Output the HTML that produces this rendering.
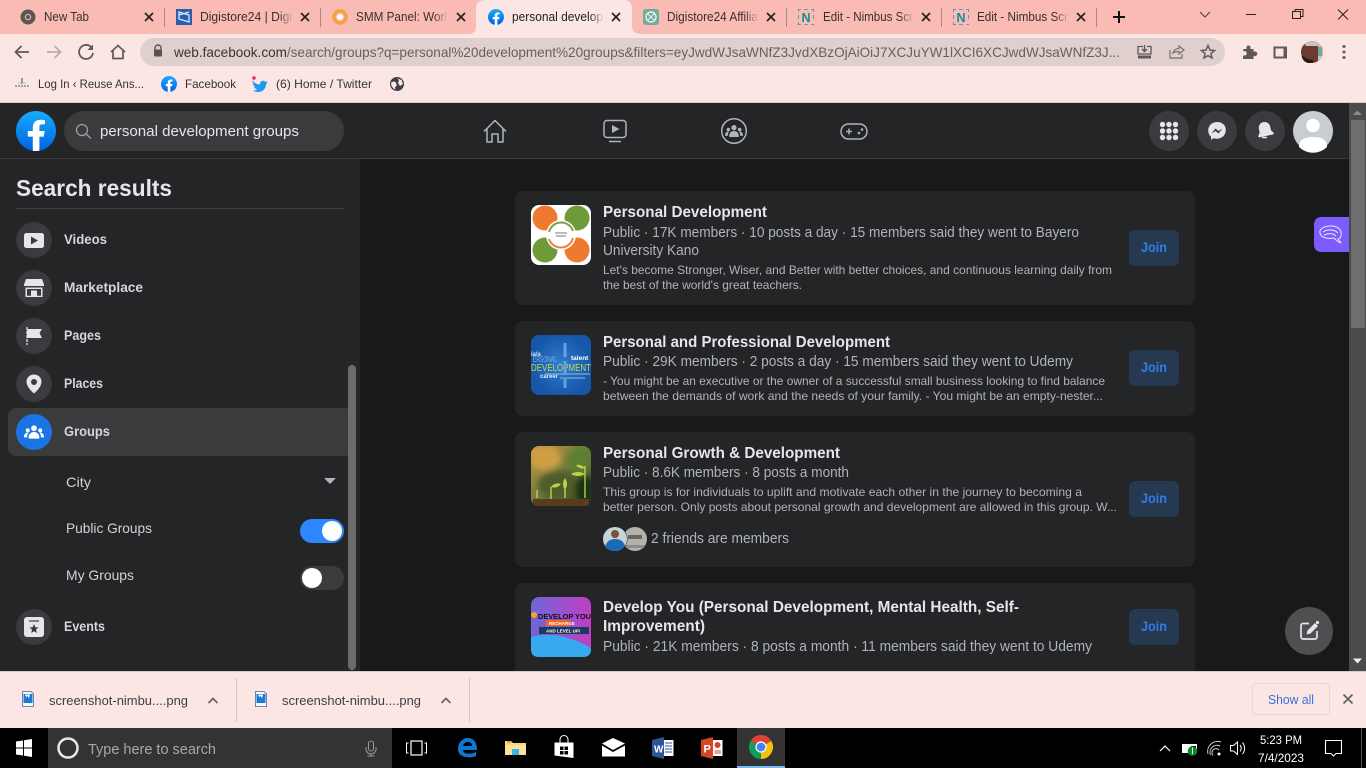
<!DOCTYPE html>
<html><head><meta charset="utf-8"><title>personal development groups</title>
<style>
html,body{margin:0;padding:0;width:1366px;height:768px;overflow:hidden;background:#18191a}
svg{display:block;font-family:"Liberation Sans",sans-serif}
.tab{font-size:12.5px;fill:#3a2f2e}
.bm{font-size:12px;fill:#333}
.side{font-size:14px;font-weight:700;fill:#d4d6db}
.opt{font-size:14px;fill:#d0d2d6}
.t{font-size:16px;font-weight:700;fill:#e4e6eb}
.m{font-size:14.5px;fill:#b0b3b8}
.d{font-size:12px;fill:#b0b3b8}
.j{font-size:14px;font-weight:700;fill:#2d7fe8}
</style></head><body>
<svg width="1366" height="768" viewBox="0 0 1366 768" xmlns="http://www.w3.org/2000/svg">
<defs>
<linearGradient id="fbg" x1="0" y1="0" x2="0" y2="1"><stop offset="0" stop-color="#18acfe"/><stop offset="1" stop-color="#0163e0"/></linearGradient>
<linearGradient id="fade" x1="0" x2="1"><stop offset="0" stop-color="#fabbb4" stop-opacity="0"/><stop offset="1" stop-color="#fabbb4"/></linearGradient>
<linearGradient id="fadeA" x1="0" x2="1"><stop offset="0" stop-color="#fce6e4" stop-opacity="0"/><stop offset="1" stop-color="#fce6e4"/></linearGradient>
<linearGradient id="g3" x1="0" y1="0" x2="1" y2="1"><stop offset="0" stop-color="#c99a3e"/><stop offset=".5" stop-color="#6f7a3c"/><stop offset="1" stop-color="#263f1c"/></linearGradient>
<linearGradient id="g4" x1="0" y1="0" x2="1" y2="0"><stop offset="0" stop-color="#6f66d8"/><stop offset="1" stop-color="#c03fc4"/></linearGradient>
<radialGradient id="g2"><stop offset="0" stop-color="#2f7fd2"/><stop offset="1" stop-color="#1757a8"/></radialGradient>
<symbol id="fb" viewBox="0 0 40 40"><path fill="url(#fbg)" d="M16.7 39.8C7.2 38.1 0 29.9 0 20 0 9 9 0 20 0s20 9 20 20c0 9.900-7.200 18.100-16.700 19.800l-1.100-.9h-4.400l-1.100.9z"/><path fill="#fff" d="M27.800 25.600l.9-5.600h-5.300v-3.900c0-1.600.6-2.800 3-2.800H29V9.200c-1.400-.2-3-.4-4.400-.4-4.600 0-7.800 2.800-7.800 7.800V20h-5v5.600h5v14.100c1.100.2 2.200.3 3.300.3 1.100 0 2.200-.1 3.300-.3V25.600h4.400z"/></symbol>
<symbol id="x" viewBox="0 0 10 10"><path d="M1 1L9 9M9 1L1 9" stroke="#222" stroke-width="1.700" fill="none"/></symbol>
<symbol id="nim" viewBox="0 0 16 16"><path d="M0 3V0H3M6 0H10M13 0H16V3M16 6V10M0 6V10M0 13V16H3M6 16H10M13 16H16" fill="none" stroke="#0f8c9c" stroke-width="1.200"/><text x="3.500" y="13" font-size="12.500" font-weight="700" fill="#0f8c9c">N</text></symbol>
<symbol id="ppl" viewBox="0 0 24 24"><circle cx="12" cy="7.500" r="3.500"/><circle cx="4.500" cy="10" r="2.400"/><circle cx="19.500" cy="10" r="2.400"/><path d="M5.500 19c0-4.300 2.600-7 6.500-7s6.500 2.700 6.500 7c0 .6-.4 1-1 1h-11c-.6 0-1-.4-1-1zM0 18c0-3 1.500-5.300 4.500-5.300.5 0 .8 0 1 .1C4.300 14 3.700 16 3.700 18.500H1c-.6 0-1-.1-1-.5zM24 18c0-3-1.500-5.300-4.500-5.300-.5 0-.8 0-1 .1 1.200 1.200 1.800 3.200 1.800 5.700H23c.6 0 1-.1 1-.5z"/></symbol>
<symbol id="file" viewBox="0 0 12 16"><path d="M.5.500H9L11.500 3V15.500H.5Z" fill="#f5f7fa" stroke="#6a86a8"/><rect x="1.500" y="3" width="9" height="9" fill="#1c78d4"/><path d="M3 3.500l1.500 3 1-2 1.500 3 1-4z" fill="#fff"/></symbol>
<filter id="bl"><feGaussianBlur stdDeviation="3"/></filter>
<clipPath id="c3"><rect x="531" y="446" width="60" height="60" rx="8"/></clipPath>
</defs>

<!-- tab strip -->
<rect width="1366" height="34" fill="#fabbb4"/>
<rect y="34" width="1366" height="68" fill="#fce6e4"/>
<path d="M468 34Q476 34 476 26V9Q476 0 485 0H623Q632 0 632 9V26Q632 34 640 34Z" fill="#fce6e4"/>
<g stroke="#a58a86" stroke-width="1"><path d="M164.500 8V27M320.500 8V27M786.500 8V27M941.500 8V27M1096.500 8V27"/></g>

<circle cx="28" cy="17" r="7.500" fill="#5a5655"/><circle cx="28" cy="17" r="3.200" fill="#fabbb4"/><circle cx="28" cy="17" r="2.200" fill="#5a5655"/>
<text class="tab" x="44" y="21" textLength="45" lengthAdjust="spacingAndGlyphs">New Tab</text>
<use href="#x" x="144" y="12" width="10" height="10"/>

<rect x="176" y="9" width="16" height="16" fill="#2a5db0"/><path d="M179 12L189 15V22L179 19ZM189 12L179 15" fill="none" stroke="#d9e6f7" stroke-width="1.300"/>
<text class="tab" x="200" y="21" textLength="92" lengthAdjust="spacingAndGlyphs">Digistore24 | Digi</text>
<rect x="279" y="8" width="14" height="18" fill="url(#fade)"/>
<use href="#x" x="300" y="12" width="10" height="10"/>

<circle cx="340" cy="17" r="6" fill="none" stroke="#f6a13b" stroke-width="3.500"/><circle cx="340" cy="17" r="3" fill="#fff"/>
<text class="tab" x="356" y="21" textLength="91" lengthAdjust="spacingAndGlyphs">SMM Panel: Worl</text>
<rect x="434" y="8" width="14" height="18" fill="url(#fade)"/>
<use href="#x" x="456" y="12" width="10" height="10"/>

<use href="#fb" x="488" y="9" width="16" height="16"/>
<text class="tab" x="512" y="21" textLength="91" lengthAdjust="spacingAndGlyphs" style="fill:#222">personal develop</text>
<rect x="590" y="8" width="14" height="18" fill="url(#fadeA)"/>
<use href="#x" x="611" y="12" width="10" height="10"/>

<rect x="643" y="9" width="16" height="16" rx="3" fill="#74aa9c"/><circle cx="651" cy="17" r="5" fill="none" stroke="#e5f2ee" stroke-width="1.400"/><path d="M648 14L654 20M654 14L648 20" stroke="#e5f2ee"/>
<text class="tab" x="667" y="21" textLength="91" lengthAdjust="spacingAndGlyphs">Digistore24 Affilia</text>
<rect x="745" y="8" width="14" height="18" fill="url(#fade)"/>
<use href="#x" x="766" y="12" width="10" height="10"/>

<use href="#nim" x="798" y="9" width="16" height="16"/>
<text class="tab" x="823" y="21" textLength="90" lengthAdjust="spacingAndGlyphs">Edit - Nimbus Scr</text>
<rect x="900" y="8" width="14" height="18" fill="url(#fade)"/>
<use href="#x" x="921" y="12" width="10" height="10"/>

<use href="#nim" x="953" y="9" width="16" height="16"/>
<text class="tab" x="977" y="21" textLength="91" lengthAdjust="spacingAndGlyphs">Edit - Nimbus Scr</text>
<rect x="1055" y="8" width="14" height="18" fill="url(#fade)"/>
<use href="#x" x="1076" y="12" width="10" height="10"/>

<path d="M1119 11V23M1113 17H1125" stroke="#111" stroke-width="2" fill="none"/>
<path d="M1200 12L1205 17L1210 12" stroke="#444" fill="none"/>
<path d="M1246 14.500H1256" stroke="#222"/>
<path d="M1292.500 11.500H1300.500V18.500H1292.500ZM1295 11V9.500H1303V16.500H1301" stroke="#222" fill="none"/>
<path d="M1338 9.500L1348 19.500M1348 9.500L1338 19.500" stroke="#222" fill="none"/>

<!-- toolbar -->
<path d="M29 52H16M21.500 46L15.500 52L21.500 58" stroke="#5f5a59" stroke-width="1.800" fill="none"/>
<path d="M47 52H60M54.500 46L60.500 52L54.500 58" stroke="#b9aeac" stroke-width="1.800" fill="none"/>
<path d="M91.500 47.500A7 7 0 1 0 93 53" stroke="#5f5a59" stroke-width="1.800" fill="none"/><path d="M93 44.500V50H87.500Z" fill="#5f5a59"/>
<path d="M111 52L118 45.500L125 52M113 50.500V58.500H123V50.500" stroke="#5f5a59" stroke-width="1.700" fill="none"/>
<rect x="140" y="38" width="1085" height="28" rx="14" fill="#dfd0cd"/>
<path d="M155 49.500V48a3 3 0 0 1 6 0V49.500" stroke="#5a5150" stroke-width="1.400" fill="none"/><rect x="154" y="49.500" width="8" height="7" rx="1" fill="#5a5150"/>
<text x="174" y="57" font-size="14" fill="#6a5f5e" textLength="946" lengthAdjust="spacingAndGlyphs"><tspan fill="#3c3332">web.facebook.com</tspan>/search/groups?q=personal%20development%20groups&amp;filters=eyJwdWJsaWNfZ3JvdXBzOjAiOiJ7XCJuYW1lXCI6XCJwdWJsaWNfZ3J...</text>
<path d="M1143 46.500H1138V54H1151V46.500H1147" fill="none" stroke="#5f5a59" stroke-width="1.300"/><path d="M1144.500 45V51.500M1142 49L1144.500 51.500L1147 49" fill="none" stroke="#5f5a59" stroke-width="1.400"/><rect x="1138" y="55.500" width="13" height="3" fill="#5f5a59"/>
<path d="M1170 50V58H1182V54M1173 53C1174 49.500 1177 48.500 1179 48.500V46L1184 50L1179 54V51.500C1177 51.500 1175 51.500 1173 53Z" fill="none" stroke="#7a6f6e" stroke-width="1.200"/>
<path d="M1208 45.500L1210 50L1214.500 50.500L1211 53.500L1212 58L1208 55.600L1204 58L1205 53.500L1201.500 50.500L1206 50Z" fill="none" stroke="#5f5a59" stroke-width="1.500"/>
<path d="M1243.500 49H1246.500V47.500a2 2 0 0 1 4 0V49H1253.500V51.500H1255a2.300 2.300 0 0 1 0 4.600H1253.500V59H1243V55.500H1244.500a2.200 2.200 0 0 0 0-4.400H1243Z" fill="#5f5a59"/>
<path d="M1273.500 46.500H1287V58.500H1273.500Z" fill="#5f5a59"/><rect x="1275.500" y="48.500" width="8" height="8" fill="#fce6e4"/>
<circle cx="1312" cy="52" r="11" fill="#6b3a30"/><path d="M1312 41a11 11 0 0 1 11 11a11 11 0 0 1-5 9.200V46H1306L1304.500 44A11 11 0 0 1 1312 41Z" fill="#c9c0c4"/><path d="M1318 47h4v9h-4z" fill="#6fa6a0"/><path d="M1301.500 55C1305 58 1309 60 1313 60V63H1308C1304 62 1302 59 1301.500 55Z" fill="#2a1712"/>
<circle cx="1344" cy="46.500" r="1.500" fill="#5f5a59"/><circle cx="1344" cy="52" r="1.500" fill="#5f5a59"/><circle cx="1344" cy="57.500" r="1.500" fill="#5f5a59"/>

<!-- bookmarks -->
<path d="M15 86H29" stroke="#7c8a80" stroke-width="1.500" stroke-dasharray="2 1"/><path d="M22 78V84" stroke="#8aa092" stroke-width="2"/><path d="M18 83H26" stroke="#bbb" stroke-width="1"/>
<text class="bm" x="38" y="88" textLength="106" lengthAdjust="spacingAndGlyphs">Log In ‹ Reuse Ans...</text>
<use href="#fb" x="161" y="76" width="16" height="16"/>
<text class="bm" x="185" y="88" textLength="51" lengthAdjust="spacingAndGlyphs">Facebook</text>
<path d="M252.500 80.500C254.500 83 257 84.300 260 84.500C259.500 81.500 263 79.500 265.300 81.700L267.500 81C267 82 266.500 82.500 266 83L267.500 82.700C267 83.500 266.500 84 266 84.300C266 89 262.500 92 258.500 92C256 92 254.500 91.500 253 90.500C255 90.700 256.500 90 257.500 89.300C255.500 89 254.500 88 254 86.700H255.500C253.500 86 252.800 84.500 252.800 83.500L254.300 84C252.800 83 252 81.500 252.500 80.500Z" fill="#1d9bf0"/><circle cx="254" cy="78" r="1.800" fill="#e8246a"/>
<text class="bm" x="276" y="88" textLength="96" lengthAdjust="spacingAndGlyphs">(6) Home / Twitter</text>
<circle cx="397" cy="84" r="7" fill="#3c4043"/><path d="M391.500 82L395 81.500L397 85L395 87.500L395.500 90L393 88L391 85ZM397 78L401.500 80L403 84L400 86L398 83L399 80Z" fill="#fce6e4"/>
<rect y="102" width="1366" height="1" fill="#d8ccca"/>

<!-- facebook page -->
<rect y="103" width="1349" height="568" fill="#18191a"/>
<rect y="103" width="1349" height="55" fill="#242526"/>
<rect y="158" width="1349" height="1" fill="#3a3b3c"/>
<use href="#fb" x="16" y="111" width="40" height="40"/>
<rect x="64" y="111" width="280" height="40" rx="20" fill="#3a3b3c"/>
<circle cx="82" cy="130" r="5.500" fill="none" stroke="#9a9da1" stroke-width="1.300"/><path d="M86 134L91 138.500" stroke="#9a9da1" stroke-width="1.500"/>
<text x="100" y="136" font-size="15" fill="#e4e6eb" textLength="199" lengthAdjust="spacingAndGlyphs">personal development groups</text>

<path d="M484 131.500L495 120.500L506 131.500M487 129V142H492V134H498V142H503V129" fill="none" stroke="#b0b3b8" stroke-width="1.500" stroke-linejoin="round"/>
<rect x="604" y="120.500" width="22" height="17" rx="3" fill="none" stroke="#b0b3b8" stroke-width="1.500"/><path d="M612 125V133L619.500 129Z" fill="#b0b3b8"/><path d="M609 141.500H621" stroke="#b0b3b8" stroke-width="1.500"/>
<circle cx="734" cy="131" r="12.300" fill="none" stroke="#b0b3b8" stroke-width="1.500"/><use href="#ppl" x="725" y="122" width="18" height="18" fill="#b0b3b8"/>
<rect x="841" y="124" width="26" height="15" rx="7.500" fill="none" stroke="#b0b3b8" stroke-width="1.500"/><path d="M846 131.500H852M849 128.500V134.500" stroke="#b0b3b8" stroke-width="1.500"/><circle cx="859" cy="133" r="1.300" fill="#b0b3b8"/><circle cx="862" cy="129.500" r="1.300" fill="#b0b3b8"/>

<circle cx="1169" cy="131" r="20" fill="#3a3b3c"/>
<g fill="#e4e6eb"><circle cx="1162.500" cy="124.500" r="2.700"/><circle cx="1169" cy="124.500" r="2.700"/><circle cx="1175.500" cy="124.500" r="2.700"/><circle cx="1162.500" cy="131" r="2.700"/><circle cx="1169" cy="131" r="2.700"/><circle cx="1175.500" cy="131" r="2.700"/><circle cx="1162.500" cy="137.500" r="2.700"/><circle cx="1169" cy="137.500" r="2.700"/><circle cx="1175.500" cy="137.500" r="2.700"/></g>
<circle cx="1217" cy="131" r="20" fill="#3a3b3c"/>
<path d="M1217 122c-5 0-8.800 3.700-8.800 8.500 0 2.500 1 4.700 2.800 6.200v3l2.700-1.500c1 .3 2.100.5 3.300.5 5 0 8.800-3.700 8.800-8.700S1222 122 1217 122z" fill="#e4e6eb"/><path d="M1211.500 133.500L1215.500 128.500L1218.500 131L1222.500 128.500L1218.500 133.500L1215.500 131Z" fill="#3a3b3c"/>
<circle cx="1265" cy="131" r="20" fill="#3a3b3c"/>
<path d="M1265 122c-3.500 0-5.800 2.700-5.800 6v3.500l-2 3c-.4.700 0 1.500.8 1.500h14c.8 0 1.200-.8.800-1.500l-2-3V128c0-3.300-2.300-6-5.800-6z" fill="#e4e6eb" transform="rotate(-12 1265 130)"/><path d="M1262 137.500H1267" stroke="#e4e6eb" stroke-width="1.500"/>
<circle cx="1313" cy="131" r="20" fill="#c9ccd1"/>
<circle cx="1313" cy="125.500" r="6.800" fill="#fff"/><path d="M1299 147C1299 139 1305 137 1313 137S1327 139 1327 147A20 20 0 0 1 1299 147Z" fill="#fff"/>

<!-- sidebar -->
<rect y="159" width="360" height="512" fill="#242526"/>
<text x="16" y="196" font-size="23.500" font-weight="700" fill="#e4e6eb" textLength="156" lengthAdjust="spacingAndGlyphs">Search results</text>
<rect x="16" y="208" width="328" height="1" fill="#3e4042"/>
<rect x="8" y="408" width="344" height="48" rx="8" fill="#3a3b3c"/>
<rect x="348" y="365" width="8" height="305" rx="4" fill="#6a6b6c"/>

<circle cx="34" cy="240" r="18" fill="#3a3b3c"/>
<rect x="24" y="233" width="20" height="15" rx="2.500" fill="#e4e6eb"/><path d="M31 236.500V244.500L38 240.500Z" fill="#3a3b3c"/>
<text class="side" x="64" y="244" textLength="43" lengthAdjust="spacingAndGlyphs">Videos</text>

<circle cx="34" cy="288" r="18" fill="#3a3b3c"/>
<path d="M26 279H42L44 284.500V286H24V284.500Z" fill="#e4e6eb"/><path d="M25.500 287.500H42.500V297H25.500Z" fill="#e4e6eb"/><path d="M27 289H41V295.700H37V290.500H31V295.700H27Z" fill="#3a3b3c"/>
<text class="side" x="64" y="292" textLength="79" lengthAdjust="spacingAndGlyphs">Marketplace</text>

<circle cx="34" cy="336" r="18" fill="#3a3b3c"/>
<path d="M27 327V345" stroke="#e4e6eb" stroke-width="1.300" stroke-dasharray="3 1"/><path d="M27 329H42L39.500 333L42 338H27Z" fill="#e4e6eb"/>
<text class="side" x="64" y="340" textLength="37" lengthAdjust="spacingAndGlyphs">Pages</text>

<circle cx="34" cy="384" r="18" fill="#3a3b3c"/>
<path d="M34 374.500c4.500 0 7.500 3.200 7.500 7.300 0 4.500-4.500 9-7 11.300-.3.300-.7.300-1 0-2.500-2.300-7-6.800-7-11.300 0-4.100 3-7.300 7.500-7.300z" fill="#e4e6eb"/><circle cx="34" cy="382" r="3" fill="#3a3b3c"/>
<text class="side" x="64" y="388" textLength="39" lengthAdjust="spacingAndGlyphs">Places</text>

<circle cx="34" cy="432" r="18" fill="#1b74e4"/><use href="#ppl" x="24" y="422" width="20" height="20" fill="#fff"/>
<text class="side" x="64" y="436" textLength="46" lengthAdjust="spacingAndGlyphs">Groups</text>

<text class="opt" x="66" y="487" font-size="15" textLength="25" lengthAdjust="spacingAndGlyphs">City</text>
<path d="M324 478H336L330 484Z" fill="#b0b3b8"/>
<text class="opt" x="66" y="533" textLength="86" lengthAdjust="spacingAndGlyphs">Public Groups</text>
<rect x="300" y="519" width="44" height="24" rx="12" fill="#2d88ff"/><circle cx="332" cy="531" r="10" fill="#fff"/>
<text class="opt" x="66" y="580" textLength="68" lengthAdjust="spacingAndGlyphs">My Groups</text>
<rect x="300" y="566" width="44" height="24" rx="12" fill="#3a3b3c"/><circle cx="312" cy="578" r="10" fill="#fff"/>

<circle cx="34" cy="627" r="18" fill="#3a3b3c"/>
<rect x="24" y="617" width="20" height="20" rx="3" fill="#e4e6eb"/><path d="M29 621H39" stroke="#3a3b3c" stroke-width="1.200"/><path d="M34 624L35.300 627.200L38.500 627.500L36 629.600L36.800 633L34 631.200L31.200 633L32 629.600L29.500 627.500L32.700 627.200Z" fill="#3a3b3c"/>
<text class="side" x="64" y="631" textLength="41" lengthAdjust="spacingAndGlyphs">Events</text>

<!-- cards -->
<g fill="#242526"><rect x="515" y="191" width="680" height="114" rx="8"/><rect x="515" y="321" width="680" height="95" rx="8"/><rect x="515" y="432" width="680" height="135" rx="8"/><rect x="515" y="583" width="680" height="96" rx="8"/></g>

<!-- thumb 1 -->
<rect x="531" y="205" width="60" height="60" rx="8" fill="#fff"/>
<circle cx="545" cy="218" r="12.500" fill="#ee7a30"/><circle cx="577" cy="218" r="12.500" fill="#6f9a3a"/><circle cx="545" cy="250" r="12.500" fill="#6f9a3a"/><circle cx="577" cy="250" r="12.500" fill="#ee7a30"/>
<circle cx="561" cy="235" r="15" fill="#fff"/><path d="M549 232A12.500 12.500 0 0 1 573 231" fill="none" stroke="#7fa04a" stroke-width="2"/><path d="M573 238A12.500 12.500 0 0 1 549 239" fill="none" stroke="#e6824a" stroke-width="2"/>
<path d="M555 233H567M556 236H566" stroke="#777" stroke-width="1"/>
<!-- thumb 2 -->
<rect x="531" y="335" width="60" height="60" rx="8" fill="url(#g2)"/>
<text x="531" y="371" font-size="10.500" fill="#c9d94a" textLength="60" lengthAdjust="spacingAndGlyphs">DEVELOPMENT</text>
<text x="533" y="362" font-size="8.500" fill="#7fb0e6" textLength="24" lengthAdjust="spacingAndGlyphs">ERSONAL</text>
<text x="571" y="360" font-size="6.500" font-weight="700" fill="#fff">talent</text>
<text x="531" y="356" font-size="6" font-weight="700" fill="#d7e6f7">ials</text>
<text x="540" y="378" font-size="6" font-weight="700" fill="#e5edf7">career</text>
<path d="M565 343V388" stroke="#6aa0dc" stroke-width="3" stroke-dasharray="14 4"/><path d="M545 374H590M560 378H585" stroke="#6aa0dc" stroke-width="1.500"/>
<!-- thumb 3 -->
<rect x="531" y="446" width="60" height="60" rx="8" fill="url(#g3)"/>
<g clip-path="url(#c3)"><g filter="url(#bl)"><ellipse cx="545" cy="458" rx="16" ry="12" fill="#cf9f45"/><ellipse cx="580" cy="460" rx="12" ry="14" fill="#5d7f35"/><ellipse cx="560" cy="485" rx="22" ry="14" fill="#4f5d2c"/><ellipse cx="585" cy="490" rx="10" ry="14" fill="#1f3316"/></g></g>
<path d="M533 499H589V504Q589 506 583 506H539Q533 506 533 504Z" fill="#5a3b1e"/>
<g fill="none" stroke="#c7d65c" stroke-width="1.300"><path d="M551 499V487M565 498V480M585 498V466M537 498V490"/></g>
<g fill="#bcd44a"><path d="M565 478Q561 484 565 490Q569 484 565 478Z"/><path d="M551 487Q555 482 561 484Q557 489 551 487Z"/><path d="M585 474Q578 470 571 474Q578 478 585 474Z"/><path d="M585 468Q581 464 576 465Q580 470 585 468Z"/></g>
<!-- thumb 4 -->
<rect x="531" y="597" width="60" height="60" rx="8" fill="url(#g4)"/>
<path d="M531 637Q560 630 591 648V649Q591 657 583 657H539Q531 657 531 649Z" fill="#37a9ee"/>
<text x="538" y="619" font-size="7.500" font-weight="700" fill="#111" textLength="53" lengthAdjust="spacingAndGlyphs">DEVELOP YOU</text>
<circle cx="534" cy="615" r="3" fill="#f5a623"/>
<rect x="546" y="620" width="24" height="6" rx="1" fill="#f3641e"/><text x="549" y="625" font-size="4.500" font-weight="700" fill="#fff">RECHARGE</text>
<rect x="539" y="627" width="50" height="7" rx="1" fill="#1d3a5c"/><text x="546" y="632.500" font-size="4.500" font-weight="700" fill="#fff">AND LEVEL UP!</text>

<!-- card 1 -->
<text class="t" x="603" y="217" textLength="164" lengthAdjust="spacingAndGlyphs">Personal Development</text>
<text class="m" x="603" y="237" textLength="476" lengthAdjust="spacingAndGlyphs">Public · 17K members · 10 posts a day · 15 members said they went to Bayero</text>
<text class="m" x="603" y="255" textLength="96" lengthAdjust="spacingAndGlyphs">University Kano</text>
<text class="d" x="603" y="274" textLength="509" lengthAdjust="spacingAndGlyphs">Let's become Stronger, Wiser, and Better with better choices, and continuous learning daily from</text>
<text class="d" x="603" y="289" textLength="199" lengthAdjust="spacingAndGlyphs">the best of the world's great teachers.</text>
<rect x="1129" y="230" width="50" height="36" rx="6" fill="#263951"/><text class="j" x="1141" y="252" textLength="26" lengthAdjust="spacingAndGlyphs">Join</text>
<!-- card 2 -->
<text class="t" x="603" y="347" textLength="287" lengthAdjust="spacingAndGlyphs">Personal and Professional Development</text>
<text class="m" x="603" y="366" textLength="470" lengthAdjust="spacingAndGlyphs">Public · 29K members · 2 posts a day · 15 members said they went to Udemy</text>
<text class="d" x="603" y="385" textLength="502" lengthAdjust="spacingAndGlyphs">- You might be an executive or the owner of a successful small business looking to find balance</text>
<text class="d" x="603" y="400" textLength="500" lengthAdjust="spacingAndGlyphs">between the demands of work and the needs of your family. - You might be an empty-nester...</text>
<rect x="1129" y="350" width="50" height="36" rx="6" fill="#263951"/><text class="j" x="1141" y="372" textLength="26" lengthAdjust="spacingAndGlyphs">Join</text>
<!-- card 3 -->
<text class="t" x="603" y="458" textLength="237" lengthAdjust="spacingAndGlyphs">Personal Growth &amp; Development</text>
<text class="m" x="603" y="477" textLength="246" lengthAdjust="spacingAndGlyphs">Public · 8.6K members · 8 posts a month</text>
<text class="d" x="603" y="496" textLength="479" lengthAdjust="spacingAndGlyphs">This group is for individuals to uplift and motivate each other in the journey to becoming a</text>
<text class="d" x="603" y="511" textLength="514" lengthAdjust="spacingAndGlyphs">better person. Only posts about personal growth and development are allowed in this group. W...</text>
<circle cx="635" cy="539" r="12" fill="#b5b2ad"/><path d="M628 535H642V539H628Z" fill="#6a6662"/><path d="M626 545H644V548H626Z" fill="#8f8c88"/>
<circle cx="615" cy="539" r="12.500" fill="#242526"/><circle cx="615" cy="539" r="12" fill="#c6d4d8"/><circle cx="615" cy="534" r="4" fill="#7a5236"/><path d="M605 547Q607 539 615 539Q623 539 625 546Q621 551 615 551Q609 551 605 547Z" fill="#1b6bb8"/>
<text class="m" x="651" y="543" textLength="138" lengthAdjust="spacingAndGlyphs">2 friends are members</text>
<rect x="1129" y="481" width="50" height="36" rx="6" fill="#263951"/><text class="j" x="1141" y="503" textLength="26" lengthAdjust="spacingAndGlyphs">Join</text>
<!-- card 4 -->
<text class="t" x="603" y="612" textLength="416" lengthAdjust="spacingAndGlyphs">Develop You (Personal Development, Mental Health, Self-</text>
<text class="t" x="603" y="631" textLength="102" lengthAdjust="spacingAndGlyphs">Improvement)</text>
<text class="m" x="603" y="651" textLength="489" lengthAdjust="spacingAndGlyphs">Public · 21K members · 8 posts a month · 11 members said they went to Udemy</text>
<rect x="1129" y="609" width="50" height="36" rx="6" fill="#263951"/><text class="j" x="1141" y="631" textLength="26" lengthAdjust="spacingAndGlyphs">Join</text>

<!-- brain tab -->
<path d="M1349 217H1322Q1314 217 1314 225V244Q1314 252 1322 252H1349Z" fill="#7c5cfc"/>
<g fill="none" stroke="#efeaff" stroke-width="1"><path d="M1320 233C1319 229 1324 226 1331 226C1338 226 1342 230 1341 235C1341 238 1339 239 1338 239L1341 243L1337 241L1334 238C1328 239 1321 238 1320 233Z"/><path d="M1323 232C1327 229 1334 229 1338 233M1324 235C1328 233 1333 233 1336 236"/></g>
<!-- compose fab -->
<circle cx="1309" cy="631" r="24" fill="#4e4f50"/>
<path d="M1309 623.500H1303A2 2 0 0 0 1301 625.500V637A2 2 0 0 0 1303 639H1315A2 2 0 0 0 1317 637V631" fill="none" stroke="#e4e6eb" stroke-width="1.700"/><path d="M1306.500 634.500L1307.500 630.500L1315 623L1318 626L1310.500 633.500Z" fill="#e4e6eb"/><circle cx="1317.500" cy="622.500" r="1.600" fill="#e4e6eb"/>

<!-- page scrollbar -->
<rect x="1349" y="103" width="17" height="568" fill="#4a4b4c"/>
<path d="M1353 115L1357.500 110.500L1362 115Z" fill="#8a8b8c"/>
<rect x="1351" y="120" width="14" height="208" fill="#6e6e6e"/>
<path d="M1353 658.500H1362L1357.500 663.500Z" fill="#f0f0f0"/>

<!-- downloads bar -->
<rect y="671" width="1366" height="57" fill="#fce6e4"/>
<rect y="671" width="1366" height="1" fill="#d8ccca"/>
<use href="#file" x="22" y="691" width="12" height="16"/>
<text x="49" y="705" font-size="13" fill="#3c4043" textLength="139" lengthAdjust="spacingAndGlyphs">screenshot-nimbu....png</text>
<path d="M208.500 703L213 698.500L217.500 703" fill="none" stroke="#6a6261" stroke-width="1.700"/>
<rect x="236" y="678" width="1" height="44" fill="#cfc4c2"/>
<use href="#file" x="255" y="691" width="12" height="16"/>
<text x="282" y="705" font-size="13" fill="#3c4043" textLength="139" lengthAdjust="spacingAndGlyphs">screenshot-nimbu....png</text>
<path d="M441.500 703L446 698.500L450.500 703" fill="none" stroke="#6a6261" stroke-width="1.700"/>
<rect x="469" y="678" width="1" height="44" fill="#cfc4c2"/>
<rect x="1252.500" y="683.500" width="77" height="31" rx="3.500" fill="none" stroke="#ddd9dc"/>
<text x="1268" y="704" font-size="13" fill="#3b6fd8" textLength="46" lengthAdjust="spacingAndGlyphs">Show all</text>
<path d="M1343.500 694.500L1352.500 703.500M1352.500 694.500L1343.500 703.500" stroke="#5f6368" stroke-width="1.800"/>

<!-- taskbar -->
<rect y="728" width="1366" height="40" fill="#000"/>
<path d="M16 741.500L23 740.500V747.500H16ZM24 740.300L32 739V747.500H24ZM16 748.500H23V755.500L16 754.500ZM24 748.500H32V757L24 755.700Z" fill="#fff"/>
<rect x="48" y="728" width="344" height="40" fill="#333"/>
<circle cx="68" cy="748" r="9.500" fill="none" stroke="#e8e8e8" stroke-width="2.500"/>
<text x="88" y="754" font-size="14.500" fill="#a8a8a8" textLength="128" lengthAdjust="spacingAndGlyphs">Type here to search</text>
<rect x="368.500" y="741" width="5" height="10" rx="2.500" fill="none" stroke="#9a9a9a"/><path d="M366 747V749A5 5 0 0 0 376 749V747M371 754V756M367.500 756H374.500" fill="none" stroke="#9a9a9a"/>
<rect x="411" y="741" width="11" height="14" fill="none" stroke="#fff" stroke-width="1.200"/><path d="M408.500 743H406.500V753H408.500M424.500 743H426.500V753H424.500" fill="none" stroke="#fff"/>
<path d="M458 749C458 742 463 738 468 738C473 738 477 742 477 749V750H463C463 754 470 755 476 752V756C468 759 458 757 458 749ZM463 746H472C472 743 470 742 468 742C465.500 742 463.500 743.500 463 746Z" fill="#0a78d7"/>
<path d="M505 741H511L513 743H526V755H505Z" fill="#f5d77e"/><path d="M505 745H526V755H505Z" fill="#fbe29a"/><rect x="512" y="749" width="7" height="6" fill="#3ab2e8"/><rect x="507" y="741" width="4" height="2" fill="#d8a93c"/>
<path d="M554.500 742.500H573.500V758L554.500 755.500Z" fill="#fff"/><path d="M560 743V739.500A4 4 0 0 1 568 739.500V743" fill="none" stroke="#fff"/><g fill="#000"><rect x="560" y="746.500" width="3.500" height="3.500"/><rect x="564.500" y="746.500" width="3.500" height="3.500"/><rect x="560" y="751" width="3.500" height="3.500"/><rect x="564.500" y="751" width="3.500" height="3.500"/></g>
<path d="M602 743.500L613 738L625 743.500L613 750ZM602 745.500L613 752L625 745.500V756.500H602Z" fill="#fff"/>
<path d="M652 740L664 737V759L652 756Z" fill="#2b5797"/><rect x="664" y="740" width="9.500" height="16" fill="#fff"/><path d="M665 743H672M665 746H672M665 749H672M665 752H672" stroke="#2b5797"/><text x="654" y="752.500" font-size="10" font-weight="700" fill="#fff">W</text>
<path d="M701 740L713 737V759L701 756Z" fill="#d24726"/><rect x="713" y="740" width="9.500" height="16" fill="#fff"/><circle cx="717.500" cy="745" r="3" fill="#d24726"/><path d="M714.500 751H721M714.500 753H721" stroke="#d24726"/><text x="703.500" y="752.500" font-size="11" font-weight="700" fill="#fff">P</text>
<rect x="737" y="728" width="48" height="40" fill="#333"/><rect x="737" y="766" width="48" height="2" fill="#76b9ed"/>
<g transform="translate(761 747)"><path d="M0 0L-10.400 -6A12 12 0 0 1 10.400 -6Z" fill="#db4437"/><path d="M0 0L10.400 -6A12 12 0 0 1 0 12Z" fill="#f4c20d"/><path d="M0 0L0 12A12 12 0 0 1 -10.400 -6Z" fill="#0f9d58"/><circle r="5.600" fill="#fff"/><circle r="4.400" fill="#4285f4"/></g>

<path d="M1160 751L1165 746L1170 751" fill="none" stroke="#fff" stroke-width="1.200"/>
<rect x="1182.500" y="744.500" width="14" height="8" fill="#fff" stroke="#fff"/><rect x="1191" y="746" width="5" height="5" fill="#000"/><circle cx="1192.500" cy="751" r="4.800" fill="#0b8a2a"/><path d="M1192.500 747.500V754" stroke="#fff"/>
<g fill="none" stroke="#ccc"><path d="M1208 754A10 10 0 0 1 1221 742"/><path d="M1210.500 755A7 7 0 0 1 1220 746"/><path d="M1213 755.500A4 4 0 0 1 1219 750"/></g><circle cx="1219" cy="754" r="1.500" fill="#fff"/>
<path d="M1230.500 745.500H1233.500L1237.500 742V754.500L1233.500 751H1230.500Z" fill="none" stroke="#fff"/><path d="M1240 745A5 5 0 0 1 1240 751.500M1242.500 742.500A9 9 0 0 1 1242.500 754" fill="none" stroke="#fff"/>
<text x="1260" y="744" font-size="12" fill="#fff" textLength="42" lengthAdjust="spacingAndGlyphs">5:23 PM</text>
<text x="1258" y="762" font-size="12" fill="#fff" textLength="46" lengthAdjust="spacingAndGlyphs">7/4/2023</text>
<path d="M1325.500 740.500H1341.500V753.500H1336L1333.500 756L1331 753.500H1325.500Z" fill="none" stroke="#fff" stroke-width="1.100"/>
<rect x="1361" y="728" width="1" height="40" fill="#555"/>
</svg>
</body></html>
